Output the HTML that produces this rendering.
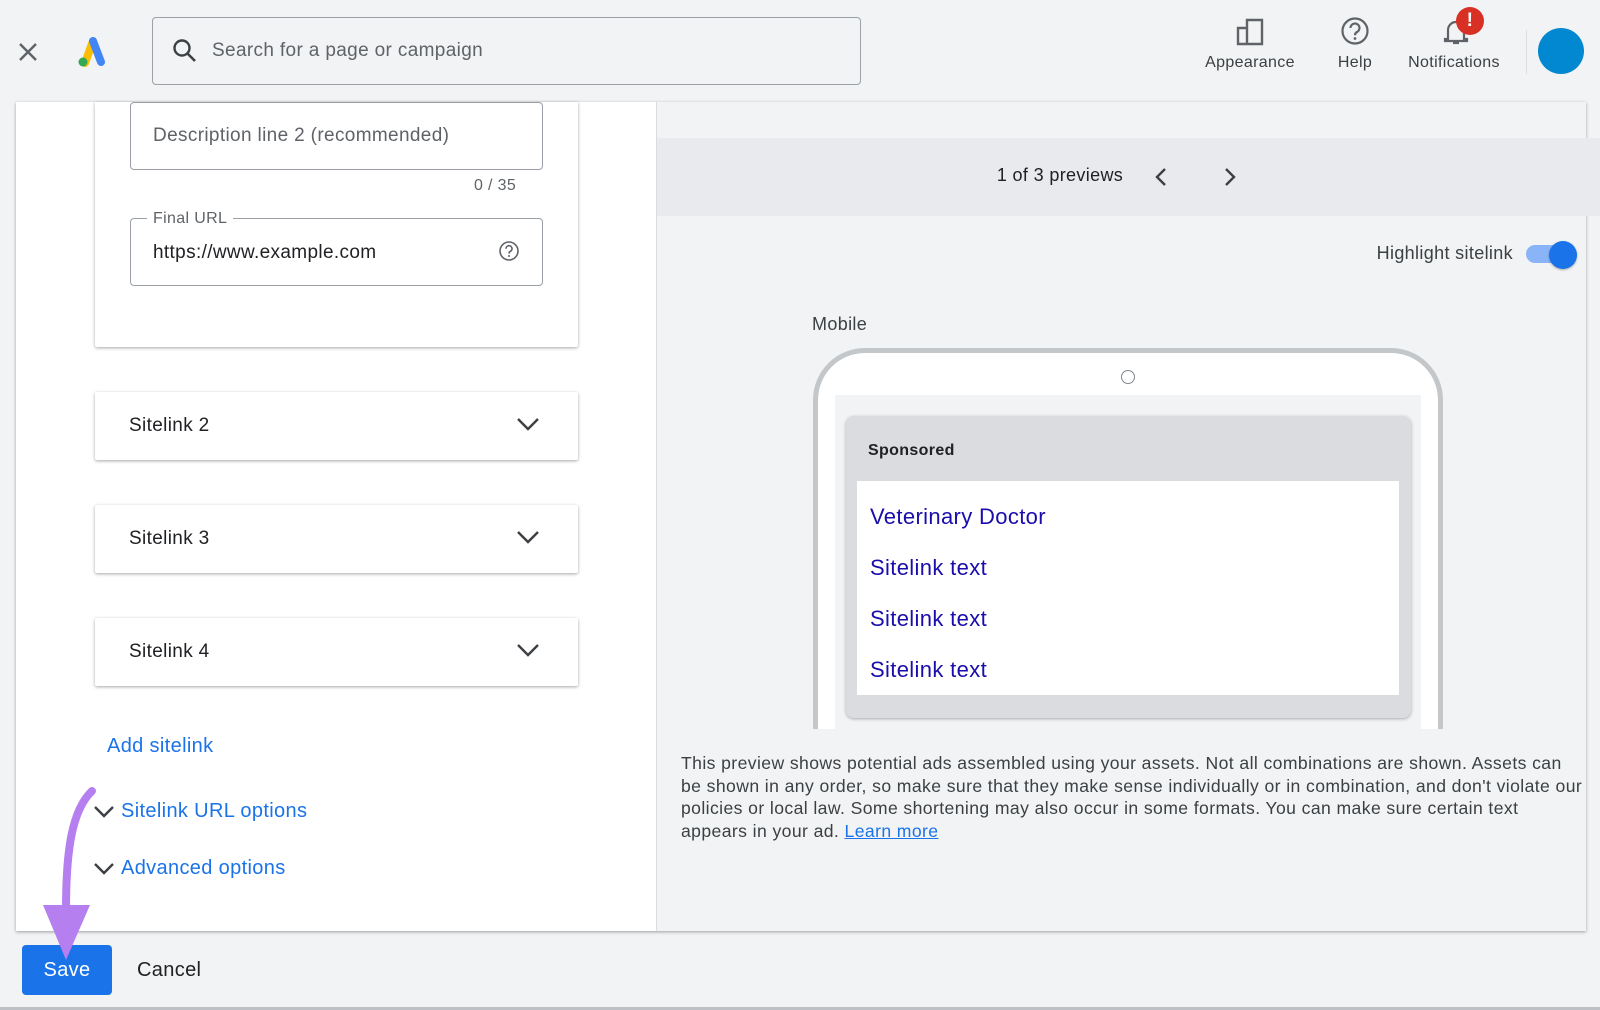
<!DOCTYPE html><html><head><meta charset="utf-8"><style>
*{box-sizing:border-box;margin:0;padding:0}
body{width:1600px;height:1010px;background:#f1f3f4;font-family:"Liberation Sans",Roboto,sans-serif;position:relative;overflow:hidden;color:#202124;letter-spacing:.35px}
.a{position:absolute}
.field{position:absolute;border:1px solid #9aa0a6;border-radius:4px;background:#fff}
.card{position:absolute;left:95px;width:483px;background:#fff;box-shadow:0 1px 3px rgba(0,0,0,.35);border-radius:2px}
.sl{height:68px;font-size:19px;color:#202124}
.sl span{position:absolute;left:34px;top:23px}
.sl svg{position:absolute;right:38px;top:24px}
.lnk{position:absolute;left:13px;font-size:22px;color:#1a0dab}
.top{font-size:16px;color:#3c4043;text-align:center}
</style></head><body>
<svg class="a" style="left:17px;top:41px" width="22" height="22" viewBox="0 0 22 22"><path d="M3 3L19 19M19 3L3 19" stroke="#5f6368" stroke-width="2.4"/></svg>
<svg class="a" style="left:74px;top:35px" width="34" height="32" viewBox="0 0 34 32"><path d="M11 28L19 6" stroke="#fbbc04" stroke-width="8" stroke-linecap="round"/><path d="M19 6L27 27" stroke="#4285f4" stroke-width="8" stroke-linecap="round"/><circle cx="9" cy="27" r="4.5" fill="#34a853"/></svg>
<div class="field" style="left:152px;top:17px;width:709px;height:68px;border-color:#9aa0a6;background:#f1f3f4"></div>
<svg class="a" style="left:172px;top:38px" width="26" height="26" viewBox="0 0 26 26"><circle cx="10" cy="10" r="7.5" fill="none" stroke="#3c4043" stroke-width="2.4"/><path d="M15.5 15.5L23 23" stroke="#3c4043" stroke-width="2.6"/></svg>
<div class="a" style="left:212px;top:40px;font-size:19px;color:#5f6368">Search for a page or campaign</div>
<svg class="a" style="left:1236px;top:16px" width="30" height="30" viewBox="0 0 30 30"><path d="M2 12h9v16H2zM11 4h15v24H11z" fill="none" stroke="#5f6368" stroke-width="2.4"/></svg>
<div class="a top" style="left:1190px;top:54px;width:120px">Appearance</div>
<svg class="a" style="left:1340px;top:16px" width="30" height="30" viewBox="0 0 30 30"><circle cx="15" cy="15" r="12.5" fill="none" stroke="#5f6368" stroke-width="2.2"/><path d="M10.5 12a4.5 4.5 0 1 1 6.5 4c-1.5 .8-2 1.6-2 3.3" fill="none" stroke="#5f6368" stroke-width="2.2"/><circle cx="15" cy="22.5" r="1.4" fill="#5f6368"/></svg>
<div class="a top" style="left:1315px;top:54px;width:80px">Help</div>
<svg class="a" style="left:1441px;top:16px" width="30" height="30" viewBox="0 0 30 30"><path d="M7 23V14a8 8 0 0 1 16 0v9h3v2H4v-2z" fill="none" stroke="#5f6368" stroke-width="2.2"/><path d="M12 27h6" stroke="#5f6368" stroke-width="2.2"/></svg>
<div class="a" style="left:1456px;top:7px;width:28px;height:28px;border-radius:50%;background:#d93025;color:#fff;font-weight:bold;font-size:19px;text-align:center;line-height:28px">!</div>
<div class="a top" style="left:1394px;top:54px;width:120px">Notifications</div>
<div class="a" style="left:1526px;top:30px;width:1px;height:44px;background:#dadce0"></div>
<div class="a" style="left:1538px;top:28px;width:46px;height:46px;border-radius:50%;background:#0288d1"></div>
<div class="a" style="left:16px;top:102px;width:1570px;height:829px;background:#f1f3f4;box-shadow:0 1px 3px rgba(0,0,0,.35)"></div>
<div class="a" style="left:16px;top:102px;width:641px;height:829px;background:#fff;border-right:1px solid #dadce0"></div>
<div class="a" style="left:657px;top:138px;width:943px;height:78px;background:#e8eaed"></div>
<div class="card" style="top:102px;height:245px;border-radius:0 0 2px 2px"></div>
<div class="field" style="left:130px;top:102px;width:413px;height:68px"></div>
<div class="a" style="left:153px;top:125px;font-size:19px;color:#5f6368">Description line 2 (recommended)</div>
<div class="a" style="left:474px;top:177px;font-size:16px;color:#5f6368">0 / 35</div>
<div class="field" style="left:130px;top:218px;width:413px;height:68px"></div>
<div class="a" style="left:147px;top:210px;background:#fff;padding:0 6px;font-size:16px;color:#5f6368">Final URL</div>
<div class="a" style="left:153px;top:242px;font-size:19px;color:#202124">https://www.example.com</div>
<svg class="a" style="left:498px;top:240px" width="22" height="22" viewBox="0 0 22 22"><circle cx="11" cy="11" r="9" fill="none" stroke="#5f6368" stroke-width="1.6"/><path d="M8 8.7a3 3 0 1 1 4.3 2.7c-1 .5-1.3 1-1.3 2.2" fill="none" stroke="#5f6368" stroke-width="1.6"/><circle cx="11" cy="16" r="1" fill="#5f6368"/></svg>
<div class="card sl" style="top:392px"><span>Sitelink 2</span><svg width="24" height="16" viewBox="0 0 24 16"><path d="M2 3l10 10 10-10" fill="none" stroke="#3c4043" stroke-width="2.4"/></svg></div>
<div class="card sl" style="top:505px"><span>Sitelink 3</span><svg width="24" height="16" viewBox="0 0 24 16"><path d="M2 3l10 10 10-10" fill="none" stroke="#3c4043" stroke-width="2.4"/></svg></div>
<div class="card sl" style="top:618px"><span>Sitelink 4</span><svg width="24" height="16" viewBox="0 0 24 16"><path d="M2 3l10 10 10-10" fill="none" stroke="#3c4043" stroke-width="2.4"/></svg></div>
<div class="a" style="left:107px;top:735px;font-size:20px;color:#1a73e8">Add sitelink</div>
<svg class="a" style="left:93px;top:804px" width="22" height="16" viewBox="0 0 22 16"><path d="M2 3l9 9 9-9" fill="none" stroke="#3c4043" stroke-width="2.4"/></svg>
<div class="a" style="left:121px;top:800px;font-size:20px;color:#1a73e8">Sitelink URL options</div>
<svg class="a" style="left:93px;top:861px" width="22" height="16" viewBox="0 0 22 16"><path d="M2 3l9 9 9-9" fill="none" stroke="#3c4043" stroke-width="2.4"/></svg>
<div class="a" style="left:121px;top:857px;font-size:20px;color:#1a73e8">Advanced options</div>
<div class="a" style="left:22px;top:945px;width:90px;height:50px;background:#1a73e8;border-radius:4px;color:#fff;font-size:20px;text-align:center;line-height:50px">Save</div>
<div class="a" style="left:137px;top:959px;font-size:20px;color:#202124">Cancel</div>
<div class="a" style="left:0;top:1007px;width:1600px;height:3px;background:#bdc1c6"></div>
<svg class="a" style="left:0;top:770px" width="120" height="200" viewBox="0 0 120 200"><path d="M92 21C72 40 66 80 66 140" fill="none" stroke="#b57ff0" stroke-width="8" stroke-linecap="round"/><path d="M43 135H90L66 190z" fill="#b57ff0"/></svg>
<div class="a" style="left:985px;top:165px;width:150px;font-size:18px;color:#202124;text-align:center">1 of 3 previews</div>
<svg class="a" style="left:1153px;top:167px" width="16" height="20" viewBox="0 0 16 20"><path d="M12 2L4 10l8 8" fill="none" stroke="#3c4043" stroke-width="2.4"/></svg>
<svg class="a" style="left:1222px;top:167px" width="16" height="20" viewBox="0 0 16 20"><path d="M4 2l8 8-8 8" fill="none" stroke="#3c4043" stroke-width="2.4"/></svg>
<div class="a" style="left:1290px;top:243px;width:223px;text-align:right;font-size:18px;color:#3c4043">Highlight sitelink</div>
<div class="a" style="left:1526px;top:245px;width:46px;height:18px;border-radius:9px;background:#8ab4f8"></div>
<div class="a" style="left:1549px;top:241px;width:28px;height:28px;border-radius:50%;background:#1a73e8;box-shadow:0 1px 2px rgba(0,0,0,.3)"></div>
<div class="a" style="left:812px;top:314px;font-size:18px;color:#3c4043">Mobile</div>
<div class="a" style="left:813px;top:348px;width:630px;height:400px;border:5px solid #c4c7c9;border-radius:52px 52px 0 0;background:#fff"></div>
<div class="a" style="left:835px;top:395px;width:586px;height:340px;background:#f1f3f4"></div>
<div class="a" style="left:1121px;top:370px;width:14px;height:14px;border:1.5px solid #80868b;border-radius:50%"></div>
<div class="a" style="left:846px;top:416px;width:565px;height:302px;background:#dadce0;border-radius:8px;box-shadow:0 1px 3px rgba(0,0,0,.3)">
<div class="a" style="left:22px;top:26px;font-size:16px;font-weight:bold;color:#202124">Sponsored</div>
<div class="a" style="left:11px;top:65px;width:542px;height:214px;background:#fff">
<div class="lnk" style="top:23px">Veterinary Doctor</div>
<div class="lnk" style="top:74px">Sitelink text</div>
<div class="lnk" style="top:125px">Sitelink text</div>
<div class="lnk" style="top:176px">Sitelink text</div>
</div></div>
<div class="a" style="left:657px;top:729px;width:928px;height:20px;background:#f1f3f4"></div>
<div class="a" style="left:681px;top:752px;width:915px;white-space:nowrap;font-size:17.6px;line-height:22.6px;color:#3c4043;letter-spacing:.4px">This preview shows potential ads assembled using your assets. Not all combinations are shown. Assets can<br>be shown in any order, so make sure that they make sense individually or in combination, and don't violate our<br>policies or local law. Some shortening may also occur in some formats. You can make sure certain text<br>appears in your ad. <span style="color:#1a73e8;text-decoration:underline">Learn more</span></div>
</body></html>
